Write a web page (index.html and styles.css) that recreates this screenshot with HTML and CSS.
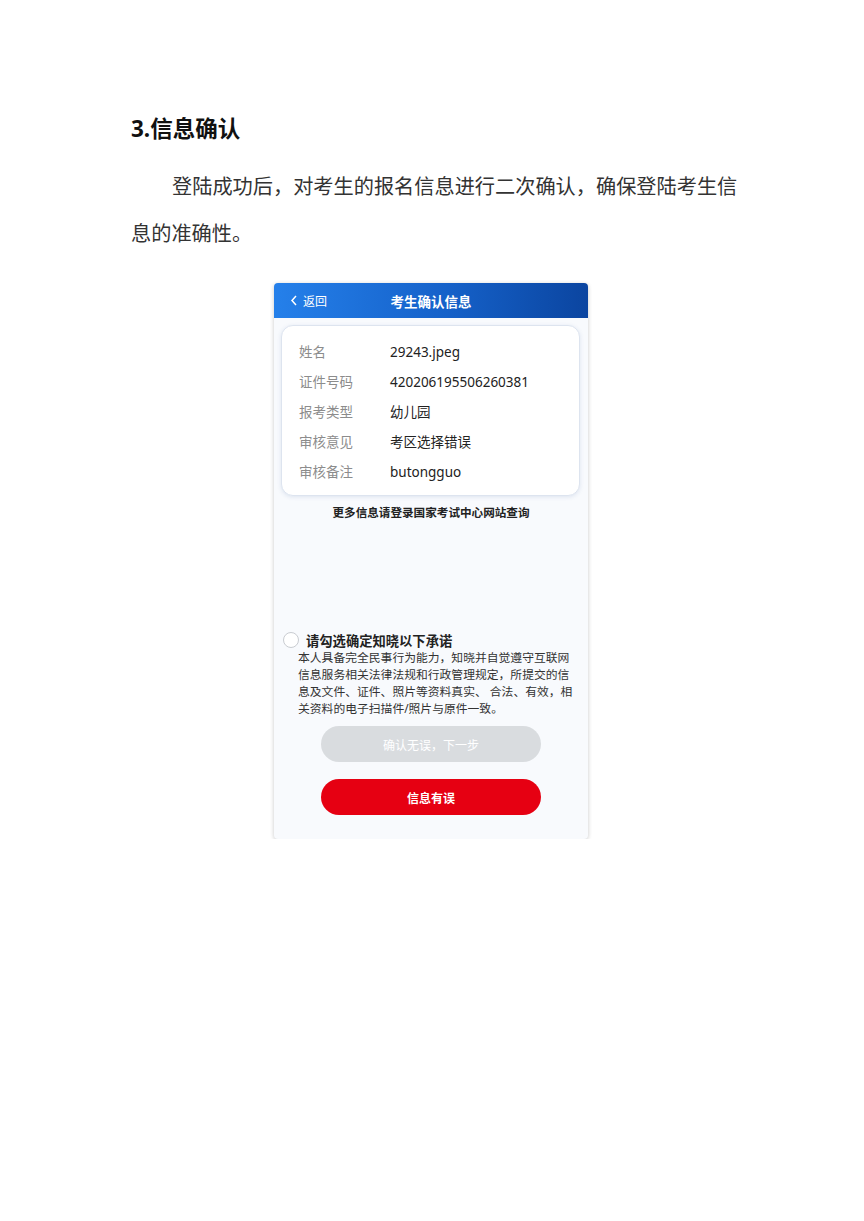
FILE: index.html
```html
<!DOCTYPE html>
<html lang="zh-CN">
<head>
    <meta charset="UTF-8">
    <meta name="viewport" content="width=device-width, initial-scale=1.0">
    <title>信息确认</title>
    <link rel="stylesheet" href="styles.css">
</head>
<body>
    <div id="page">
        <h2 class="stepTitle">3.信息确认</h2>
        <p class="stepText">登陆成功后，对考生的报名信息进行二次确认，确保登陆考生信息的准确性。</p>

        <div class="phone">
            <header class="phoneHeader">
                <span class="backLink">
                    <svg width="8" height="11" viewBox="0 0 8 11"><path d="M6 1 L2 5.5 L6 10" fill="none" stroke="#fff" stroke-width="1.5"/></svg>
                    返回
                </span>
                <span class="phoneTitle">考生确认信息</span>
            </header>

            <section class="infoCard">
                <div class="infoRow"><span class="infoLabel">姓名</span><span class="infoValue">29243.jpeg</span></div>
                <div class="infoRow"><span class="infoLabel">证件号码</span><span class="infoValue">420206195506260381</span></div>
                <div class="infoRow"><span class="infoLabel">报考类型</span><span class="infoValue">幼儿园</span></div>
                <div class="infoRow"><span class="infoLabel">审核意见</span><span class="infoValue">考区选择错误</span></div>
                <div class="infoRow"><span class="infoLabel">审核备注</span><span class="infoValue">butongguo</span></div>
            </section>
            <p class="moreInfo">更多信息请登录国家考试中心网站查询</p>

            <section class="promise">
                <div class="checkRow">
                    <span class="checkCircle"></span>
                    <span class="checkText">请勾选确定知晓以下承诺</span>
                </div>
                <p class="promiseText">本人具备完全民事行为能力，知晓并自觉遵守互联网<br>信息服务相关法律法规和行政管理规定，所提交的信<br>息及文件、证件、照片等资料真实、 合法、有效，相<br>关资料的电子扫描件/照片与原件一致。</p>
            </section>

            <div class="buttons">
                <button class="btnNext" disabled>确认无误，下一步</button>
                <button class="btnError">信息有误</button>
            </div>
        </div>
    </div>
</body>
</html>
```

FILE: styles.css
```css
* {
    box-sizing: border-box;
}
body {
    margin: 0;
    background-color: #fff;
    font-family: "Noto Sans", "Noto Sans CJK SC", sans-serif;
}
#page {
    width: 864px;
    padding: 114px 0 0 131px;
}

.stepTitle {
    margin: 0;
    font-size: 22.5px;
    line-height: 30px;
    font-weight: bold;
    color: #111;
}
.stepText {
    width: 615px;
    margin: 18px 0 0 0;
    font-family: "Noto Sans CJK SC", serif;
    font-size: 20.2px;
    line-height: 47px;
    text-indent: 41px;
    color: #333;
}

.phone {
    width: 314px;
    margin: 27px 0 0 143px;
    padding-bottom: 24px;
    background-color: #f8fafd;
    border-radius: 4px;
    box-shadow: 0 1px 4px rgba(0, 0, 0, 0.22);
    overflow: hidden;
}

.phoneHeader {
    position: relative;
    height: 35px;
    display: flex;
    align-items: center;
    justify-content: center;
    background: linear-gradient(90deg, #2580ea, #1561c9 55%, #0b45a0);
    color: #fff;
}
.backLink {
    position: absolute;
    left: 16px;
    top: 0;
    height: 35px;
    display: flex;
    align-items: center;
    gap: 5px;
    font-size: 12px;
}
.phoneTitle {
    font-size: 13.5px;
    font-weight: bold;
}

.infoCard {
    margin: 7px 8px 0 7px;
    padding: 11px 0 8px 17px;
    background-color: #fff;
    border: 1px solid #dde4ef;
    border-radius: 12px;
    box-shadow: 0 1px 4px rgba(70, 100, 160, 0.15);
}
.infoRow {
    display: flex;
    line-height: 30px;
    font-size: 13.5px;
}
.infoLabel {
    width: 91px;
    color: #8c8c8c;
}
.infoValue {
    color: #222;
}

.moreInfo {
    margin: 7px 0 0 0;
    text-align: center;
    font-size: 11.6px;
    line-height: 20px;
    font-weight: bold;
    color: #222;
}

.promise {
    margin-top: 108px;
    padding: 0 12px 0 24px;
}
.checkRow {
    display: flex;
    align-items: center;
    gap: 7px;
    margin-left: -15px;
    height: 18px;
}
.checkCircle {
    width: 16px;
    height: 16px;
    border: 1px solid #c9ccd1;
    border-radius: 50%;
    background-color: #fff;
}
.checkText {
    font-size: 13.3px;
    font-weight: bold;
    color: #222;
}
.promiseText {
    margin: 0;
    font-size: 11.8px;
    line-height: 17px;
    color: #333;
    white-space: nowrap;
}

.buttons {
    display: flex;
    flex-direction: column;
    align-items: center;
    gap: 17px;
    margin-top: 9px;
}
.buttons button {
    width: 220px;
    height: 36px;
    border: none;
    border-radius: 18px;
    font-family: "Noto Sans CJK SC", sans-serif;
    font-size: 12px;
    color: #fff;
}
.btnNext {
    background-color: #d9dcdf;
    color: #f3f3f3;
}
.btnError {
    background-color: #e60012;
    font-weight: bold;
}
```
